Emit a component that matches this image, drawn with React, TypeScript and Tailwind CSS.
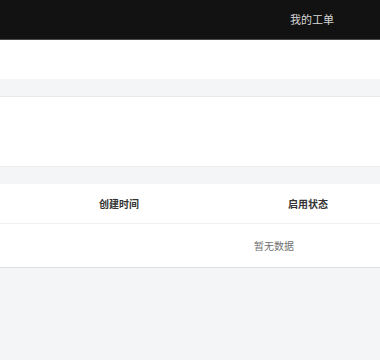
const font = { fontFamily: '"Noto Sans CJK SC", "Noto Sans", sans-serif' };

export default function App() {
  return (
    <div className="w-[380px] h-[360px] overflow-hidden bg-[#f4f5f7]" style={font}>
      <header className="h-[40px] bg-[#121212] border-b border-[#4a4a4a] flex items-center justify-end pr-[46px]">
        <span className="text-[11px] text-[#d6d6d6]">我的工单</span>
      </header>
      <div className="h-[39px] bg-white" />
      <div className="h-[18px] border-b border-[#e9eaec]" />
      <div className="h-[70px] bg-white border-b border-[#ececee]" />
      <div className="h-[17px]" />
      <div className="w-[548px] bg-white border-b border-[#dcdee2]">
        <div className="h-[40px] flex items-center border-b border-[#eeeff1] text-[10px] font-bold text-[#333]">
          <div className="w-[24px]" />
          <div className="w-[190px] text-center">创建时间</div>
          <div className="w-[188px] text-center">启用状态</div>
        </div>
        <div className="h-[43px] flex items-center justify-center text-[10px] text-[#707070]">
          暂无数据
        </div>
      </div>
    </div>
  );
}
